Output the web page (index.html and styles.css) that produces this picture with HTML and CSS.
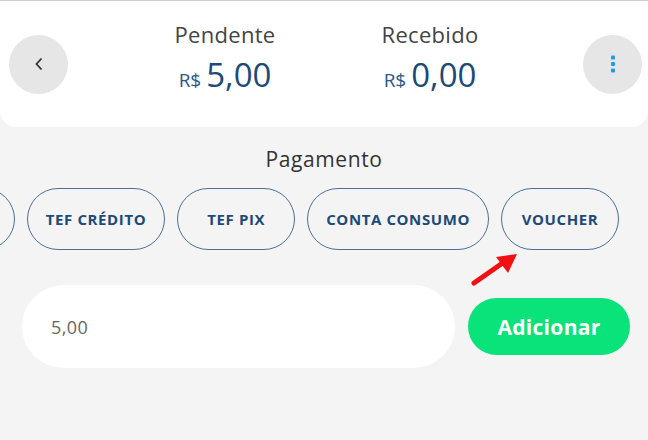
FILE: index.html
```html
<!DOCTYPE html>
<html lang="pt-BR">
<head>
  <meta charset="UTF-8">
  <meta name="viewport" content="width=device-width, initial-scale=1.0">
  <title>Pagamento</title>
  <link rel="stylesheet" href="styles.css">
</head>
<body>
  <div class="topbar">
    <button class="circle-btn">
      <svg width="10" height="14" viewBox="0 0 10 14"><path d="M7.5 1.5 L2.5 7 L7.5 12.5" fill="none" stroke="#333" stroke-width="1.8"/></svg>
    </button>

    <div class="totals">
      <div class="total">
        <div class="total-label">Pendente</div>
        <div class="total-value"><span class="cur">R$</span>5,00</div>
      </div>
      <div class="total">
        <div class="total-label">Recebido</div>
        <div class="total-value"><span class="cur">R$</span>0,00</div>
      </div>
    </div>

    <button class="circle-btn">
      <svg width="6" height="20" viewBox="0 0 6 20">
        <rect x="1" y="1.5" width="4" height="4" rx="1" fill="#1e9bf0"/>
        <rect x="1" y="8" width="4" height="4" rx="1" fill="#1e9bf0"/>
        <rect x="1" y="14.5" width="4" height="4" rx="1" fill="#1e9bf0"/>
      </svg>
    </button>
  </div>

  <h2 class="section-title">Pagamento</h2>

  <div class="chips">
    <button class="chip">DINHEIRO</button>
    <button class="chip">TEF CRÉDITO</button>
    <button class="chip">TEF PIX</button>
    <button class="chip">CONTA CONSUMO</button>
    <button class="chip">VOUCHER</button>
  </div>

  <div class="add-row">
    <input class="amount" type="text" value="5,00">
    <button class="btn-add">Adicionar</button>
  </div>

  <svg class="pointer" width="60" height="45" viewBox="0 0 60 45">
    <path d="M6 38 L36 17" stroke="#f21010" stroke-width="5" stroke-linecap="round"/>
    <path d="M49 9 L28 12 L40 28 Z" fill="#f21010"/>
  </svg>
</body>
</html>
```

FILE: styles.css
```css
body {
  margin: 0;
  padding: 0;
  font-family: 'Open Sans', 'Noto Sans', sans-serif;
  background: #f4f4f4;
  color: #333;
  position: relative;
  overflow: hidden;
  height: 440px;
}

.topbar {
  background: white;
  border-top: 1px solid #cfcfcf;
  border-radius: 0 0 16px 16px;
  height: 127px;
  box-sizing: border-box;
  padding: 0 6px 0 9px;
  display: flex;
  align-items: center;
  justify-content: space-between;
}

.circle-btn {
  width: 59px;
  height: 59px;
  border-radius: 50%;
  border: none;
  background: #e6e6e6;
  display: flex;
  align-items: center;
  justify-content: center;
  padding: 0;
  cursor: pointer;
}

.totals {
  display: flex;
  gap: 75px;
  margin-left: 4px;
}

.total {
  width: 130px;
  text-align: center;
}

.total-label {
  font-size: 22px;
  color: #444;
  line-height: 28px;
  margin-top: -8px;
  letter-spacing: 0.3px;
}

.total-value {
  font-size: 33px;
  color: #1b4a78;
  line-height: 40px;
  margin-top: 7px;
}

.cur {
  font-size: 19px;
  color: #2a5a88;
  margin-right: 5px;
}

.section-title {
  margin: 19px 0 0;
  text-align: center;
  font-size: 21px;
  font-weight: 500;
  letter-spacing: 0.6px;
  color: #333;
  line-height: 26px;
}

.chips {
  display: flex;
  justify-content: flex-end;
  gap: 12px;
  padding-right: 29px;
  margin-top: 16px;
  overflow: hidden;
}

.chip {
  flex-shrink: 0;
  height: 62px;
  min-width: 118px;
  padding: 0 18px;
  border-radius: 31px;
  border: 1.5px solid #4c6f92;
  background: transparent;
  color: #1d4a78;
  font-family: inherit;
  font-size: 15px;
  font-weight: 700;
  letter-spacing: 0.6px;
  cursor: pointer;
}

.add-row {
  display: flex;
  align-items: center;
  gap: 13px;
  padding: 0 18px 0 22px;
  margin-top: 35px;
}

.amount {
  flex: 1;
  height: 83px;
  border: none;
  border-radius: 42px;
  background: white;
  padding: 0 29px;
  font-family: inherit;
  font-size: 18px;
  letter-spacing: 0.4px;
  color: #666;
  outline: none;
  box-sizing: border-box;
}

.btn-add {
  width: 162px;
  height: 57px;
  border: none;
  border-radius: 29px;
  background: #0ae27a;
  color: white;
  font-family: inherit;
  font-size: 21px;
  font-weight: 700;
  letter-spacing: 0.3px;
  cursor: pointer;
}

.pointer {
  position: absolute;
  left: 468px;
  top: 245px;
}
```
